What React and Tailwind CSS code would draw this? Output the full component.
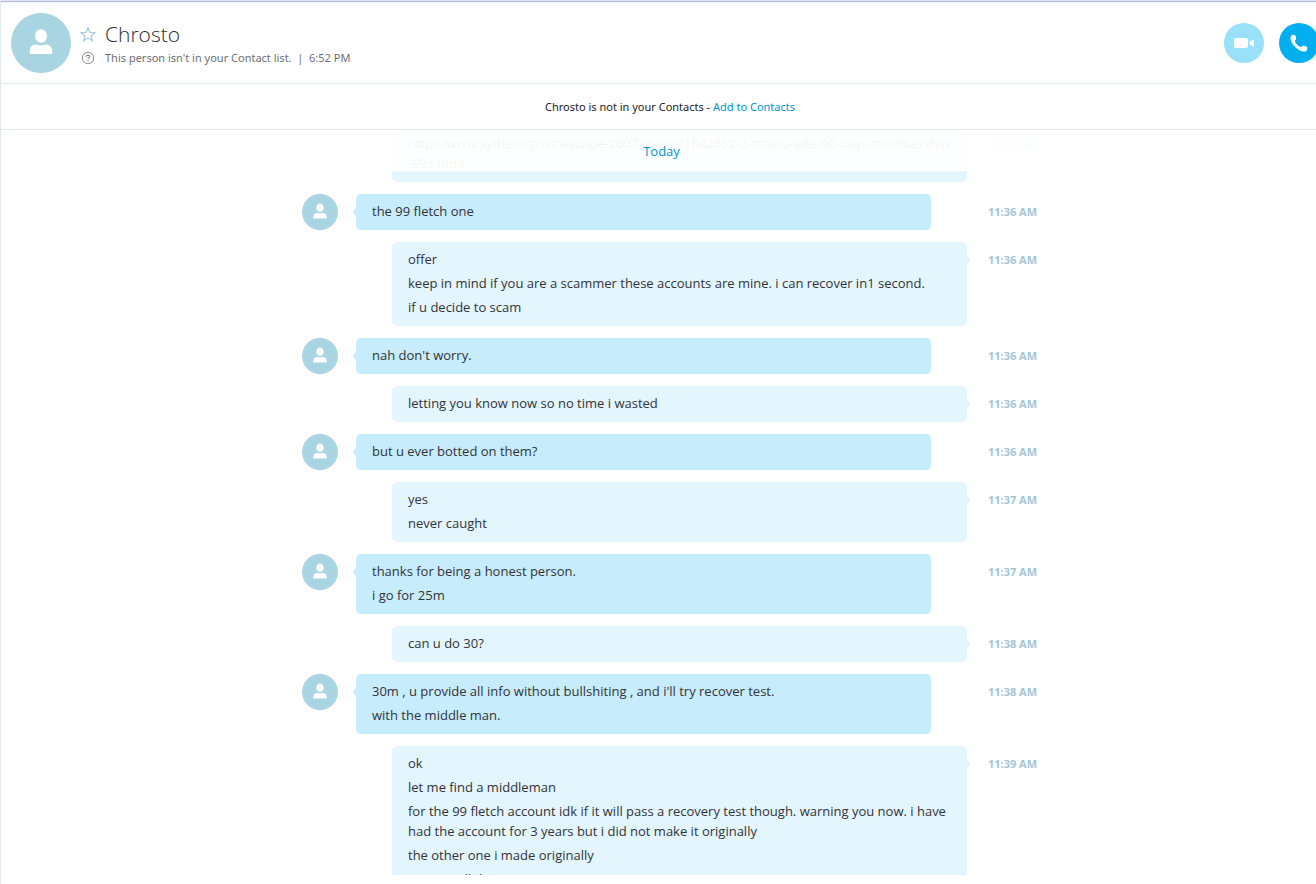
import React from 'react';

const messages = [
  {
    from: 'me',
    time: '11:35 AM',
    lines: [
      'http://www.sythe.org/runescape-2007-mains/1842052-2-mains-sale-90-days-membership\n-99s.html',
    ],
  },
  { from: 'them', time: '11:36 AM', lines: ['the 99 fletch one'] },
  {
    from: 'me',
    time: '11:36 AM',
    lines: [
      'offer',
      'keep in mind if you are a scammer these accounts are mine. i can recover in1 second.',
      'if u decide to scam',
    ],
  },
  { from: 'them', time: '11:36 AM', lines: ["nah don't worry."] },
  { from: 'me', time: '11:36 AM', lines: ['letting you know now so no time i wasted'] },
  { from: 'them', time: '11:36 AM', lines: ['but u ever botted on them?'] },
  { from: 'me', time: '11:37 AM', lines: ['yes', 'never caught'] },
  {
    from: 'them',
    time: '11:37 AM',
    lines: ['thanks for being a honest person.', 'i go for 25m'],
  },
  { from: 'me', time: '11:38 AM', lines: ['can u do 30?'] },
  {
    from: 'them',
    time: '11:38 AM',
    lines: [
      "30m , u provide all info without bullshiting , and i'll try recover test.",
      'with the middle man.',
    ],
  },
  {
    from: 'me',
    time: '11:39 AM',
    lines: [
      'ok',
      'let me find a middleman',
      'for the 99 fletch account idk if it will pass a recovery test though. warning you now. i have\nhad the account for 3 years but i did not make it originally',
      'the other one i made originally',
      'so you will do it',
    ],
  },
];

function Avatar({ className }) {
  return (
    <svg viewBox="0 0 60 60" className={className} aria-hidden="true">
      <circle cx="30" cy="30" r="30" fill="#a9d4e2" />
      <ellipse cx="30" cy="23" rx="6" ry="6.800" fill="#fff" />
      <path
        d="M18.600 39.500c0-5 2.200-7.900 6.400-7.900 1.300 0 2.600 1 5 1s3.700-1 5-1c4.200 0 6.400 2.900 6.400 7.900 0 .900-.400 1.500-1 1.500H19.600c-.600 0-1-.600-1-1.500z"
        fill="#fff"
      />
    </svg>
  );
}

function Header() {
  return (
    <header className="flex shrink-0 items-center border-b border-[#e3e9eb] py-[10px] pr-5 pl-[10px]">
      <Avatar className="size-[60px] shrink-0" />
      <div className="ml-2 flex flex-col pt-[2px]">
        <div className="flex h-7 items-center gap-2">
          <button type="button" aria-label="Add to favorites" className="flex w-[18px] justify-center">
            <svg viewBox="0 0 16 16" className="size-4" fill="none" stroke="#a0cbdc" strokeWidth="1.200">
              <path d="M8 1.800l1.900 4.500 4.900.400-3.700 3.200 1.200 4.800L8 12.100l-4.300 2.600 1.200-4.800L1.200 6.700l4.900-.400z" />
            </svg>
          </button>
          <h1 className="text-[21px] leading-7 font-light text-[#2b2c33]">Chrosto</h1>
        </div>
        <div className="flex h-5 items-center gap-2">
          <span className="flex w-[18px] justify-center">
            <svg viewBox="0 0 14 14" className="size-[14px]" fill="none" stroke="#8b8e90" aria-hidden="true">
              <circle cx="7" cy="7" r="5.700" strokeWidth="1" />
              <path d="M5.200 5.700c0-2.200 3.600-2.200 3.600-.100 0 1.200-1.800 1.200-1.800 2.500" strokeWidth="1.200" />
              <path d="M7 9v1.300" strokeWidth="1.200" />
            </svg>
          </span>
          <p className="font-['Noto_Sans',sans-serif] text-[11px] leading-5 whitespace-pre text-[#6e6f73]">
            This person isn't in your Contact list.{'  |  '}6:52 PM
          </p>
        </div>
      </div>
      <div className="ml-auto flex gap-[15px]">
        <button
          type="button"
          aria-label="Video call"
          className="flex size-10 items-center justify-center rounded-full bg-[#99e0f9]"
        >
          <svg viewBox="0 0 20 12" className="h-3 w-5" fill="#fff">
            <rect x="0" y="1" width="14" height="10" rx="2" />
            <path d="M15.200 4.800L20 2.200v7.600l-4.800-2.600z" />
          </svg>
        </button>
        <button
          type="button"
          aria-label="Call"
          className="flex size-10 items-center justify-center rounded-full bg-[#00aff0]"
        >
          <svg viewBox="0 0 18 18" className="size-[18px]" fill="#fff">
            <path d="M1.200 1.700C2 .600 4.700.400 5.300 1.400c.600 1.100.900 2.600.900 3.600 0 .900-1.500 1.200-1.400 2.100.300 2 3.800 5.600 5.900 6 .900.200 1.300-1.300 2.200-1.300 1 0 2.900.400 3.900 1 .900.600.500 3.400-.400 4.100-1.500 1.200-4.400.700-7-.700C5.500 14 2 10 .900 6.500.400 4.700.300 2.900 1.200 1.700z" />
          </svg>
        </button>
      </div>
    </header>
  );
}

function Message({ from, time, lines }) {
  const mine = from === 'me';
  return (
    <li className="flex">
      <div className="w-[54px] shrink-0">{!mine && <Avatar className="size-9" />}</div>
      <div className={`flex min-w-0 flex-1 ${mine ? 'pl-9' : 'pr-9'}`}>
        <div
          className={`relative flex min-w-0 flex-1 flex-col gap-1 rounded-[5px] pt-[7px] pr-2 pb-[9px] pl-4 ${
            mine ? 'bg-[#e3f5fd]' : 'bg-[#c7ecfc]'
          }`}
        >
          <svg
            viewBox="0 0 3 8"
            className={`absolute top-[14px] h-2 w-[3px] ${mine ? 'left-full' : 'right-full'}`}
            fill={mine ? '#e3f5fd' : '#c7ecfc'}
            aria-hidden="true"
          >
            <path d={mine ? 'M0 0l3 3v2l-3 3z' : 'M3 0L0 3v2l3 3z'} />
          </svg>
          {lines.map((line) => (
            <p key={line} className="text-[13px] leading-5 whitespace-pre-line text-[#333338]">
              {line}
            </p>
          ))}
        </div>
      </div>
      <time className="w-[71px] shrink-0 py-2 pl-[21px] font-['Noto_Sans',sans-serif] text-[11px] leading-5 font-bold whitespace-nowrap text-[#a2c6d6]">
        {time}
      </time>
    </li>
  );
}

export default function App() {
  return (
    <div className="h-screen overflow-hidden bg-white font-['Open_Sans',sans-serif]">
      {/* the call button runs past the right edge of the window */}
      <div className="-mr-[23px] flex h-full flex-col border-l border-[#dfeaef] pb-[9px]">
        <div className="h-[3px] shrink-0 border-t border-b border-t-[#e2e6f6] border-b-[#f4f5fa] bg-[#b5bad2]" />
        <Header />
        <div className="shrink-0 border-b border-[#e3eaed] py-3 text-center font-['Noto_Sans',sans-serif] text-[11px] leading-[21px] text-[#222226]">
          Chrosto is not in your Contacts -{' '}
          <a href="#add" className="text-[#0095cc]">
            Add to Contacts
          </a>
        </div>
        <main className="relative min-h-0 flex-1 overflow-hidden">
          <ul className="mx-auto -mt-1 flex max-w-[736px] flex-col gap-3">
            {messages.map((m, i) => (
              <Message key={i} {...m} />
            ))}
          </ul>
          <div className="absolute inset-x-0 top-0 bg-white/95">
            <div className="mx-auto max-w-[736px] pr-[71px] pl-[54px]">
              <h2 className="pt-[11px] pb-[10px] text-center text-[13px] leading-5 text-[#0095cc]">Today</h2>
            </div>
          </div>
        </main>
      </div>
    </div>
  );
}
